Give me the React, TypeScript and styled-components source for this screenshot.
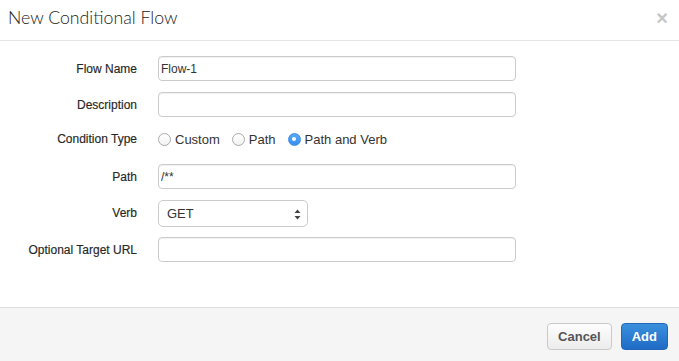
import React, { useState } from "react";
import styled, { createGlobalStyle } from "styled-components";

const GlobalStyle = createGlobalStyle`
  html, body {
    margin: 0;
    padding: 0;
    background: #fff;
    font-family: "Liberation Sans", Arial, sans-serif;
  }
`;

const Modal = styled.div`
  width: 679px;
  height: 361px;
  display: flex;
  flex-direction: column;
  background: #fff;
  overflow: hidden;
`;

const Header = styled.div`
  height: 40px;
  display: flex;
  align-items: center;
  justify-content: space-between;
  padding: 0 11px 0 8px;
  border-bottom: 1px solid #e5e5e5;
`;

const Title = styled.h4`
  margin: 0;
  font-family: Lato, "Liberation Sans", sans-serif;
  font-size: 17.7px;
  font-weight: 300;
  color: #222;
  line-height: 20px;
  padding-bottom: 4px;
`;

const Close = styled.button`
  border: none;
  background: none;
  padding: 0;
  margin-bottom: 4px;
  color: #c6c6c6;
  font-size: 20px;
  font-weight: 700;
  line-height: 1;
  font-family: "Liberation Sans", Arial, sans-serif;
`;

const Body = styled.div`
  flex: 1;
  padding: 15px 0 0;
`;

const Form = styled.div`
  display: grid;
  grid-template-columns: 137px 358px;
  column-gap: 21px;
  row-gap: 11px;
  align-items: center;
`;

const Label = styled.label<{ $raised?: boolean }>`
  text-align: right;
  font-size: 12px;
  color: #262626;
  -webkit-text-stroke: 0.15px #262626;
  margin-bottom: ${(p) => (p.$raised ? "3px" : "0")};
`;

const TextInput = styled.input`
  box-sizing: border-box;
  height: 25px;
  width: 358px;
  margin: 0;
  padding: 0 2px;
  border: 1px solid #cbcbcb;
  border-radius: 4px;
  box-shadow: inset 0 1px 1px rgba(0, 0, 0, 0.06);
  font-family: "Liberation Sans", Arial, sans-serif;
  font-size: 12px;
  color: #333;
  outline: none;
`;

const RadioGroup = styled.div`
  height: 22px;
  margin-bottom: 3px;
  display: flex;
  align-items: center;
  gap: 12px;
`;

const RadioOption = styled.label`
  display: flex;
  align-items: center;
  gap: 4px;
  font-size: 13px;
  color: #333;
  cursor: pointer;
`;

const RadioDot = styled.span<{ $checked: boolean }>`
  box-sizing: border-box;
  width: 13px;
  height: 13px;
  border-radius: 50%;
  display: inline-flex;
  align-items: center;
  justify-content: center;
  border: 1px solid ${(p) => (p.$checked ? "#3b8ee8" : "#a9a9a9")};
  background: ${(p) =>
    p.$checked ? "linear-gradient(#5aa8f6, #3a8ef0)" : "linear-gradient(#fff, #f2f2f2)"};
  &::after {
    content: "";
    width: 4px;
    height: 4px;
    border-radius: 50%;
    background: #fff;
    display: ${(p) => (p.$checked ? "block" : "none")};
  }
`;

const SelectBox = styled.div`
  box-sizing: border-box;
  position: relative;
  width: 150px;
  height: 27px;
  display: flex;
  align-items: center;
  padding: 0 8px;
  border: 1px solid #cbcbcb;
  border-radius: 5px;
  background: #fff;
  font-size: 13px;
  color: #333;
`;

const Arrows = styled.svg`
  position: absolute;
  right: 6px;
  top: 8px;
`;

const VerbRow = styled.div`
  margin-bottom: -1px;
`;

const Footer = styled.div`
  height: 54px;
  box-sizing: border-box;
  background: #f5f5f5;
  border-top: 1px solid #dedede;
  display: flex;
  justify-content: flex-end;
  align-items: flex-start;
  gap: 9px;
  padding: 15px 11px 0 0;
`;

const Button = styled.button<{ $primary?: boolean }>`
  height: 27px;
  padding: 0 10px;
  border-radius: 4px;
  font-family: "Liberation Sans", Arial, sans-serif;
  font-size: 13px;
  font-weight: 700;
  cursor: pointer;
  color: ${(p) => (p.$primary ? "#fff" : "#555")};
  border: 1px solid ${(p) => (p.$primary ? "#2367b8" : "#c9c9c9")};
  background: ${(p) =>
    p.$primary
      ? "linear-gradient(#3a90dd, #1f6bc6)"
      : "linear-gradient(#fdfdfd, #ececec)"};
`;

const options = ["Custom", "Path", "Path and Verb"];

export default function App() {
  const [type, setType] = useState("Path and Verb");

  return (
    <>
      <GlobalStyle />
      <Modal>
        <Header>
          <Title>New Conditional Flow</Title>
          <Close>×</Close>
        </Header>
        <Body>
          <Form>
            <Label>Flow Name</Label>
            <TextInput defaultValue="Flow-1" />

            <Label>Description</Label>
            <TextInput />

            <Label $raised>Condition Type</Label>
            <RadioGroup>
              {options.map((o) => (
                <RadioOption key={o} onClick={() => setType(o)}>
                  <RadioDot $checked={type === o} />
                  {o}
                </RadioOption>
              ))}
            </RadioGroup>

            <Label>Path</Label>
            <TextInput defaultValue="/**" />

            <Label>Verb</Label>
            <VerbRow>
              <SelectBox>
                GET
                <Arrows width="7" height="11" viewBox="0 0 7 11">
                  <path d="M3.5 0.5 L6.5 4 L0.5 4 Z" fill="#444" />
                  <path d="M3.5 10.5 L6.5 7 L0.5 7 Z" fill="#444" />
                </Arrows>
              </SelectBox>
            </VerbRow>

            <Label>Optional Target URL</Label>
            <TextInput />
          </Form>
        </Body>
        <Footer>
          <Button>Cancel</Button>
          <Button $primary>Add</Button>
        </Footer>
      </Modal>
    </>
  );
}
